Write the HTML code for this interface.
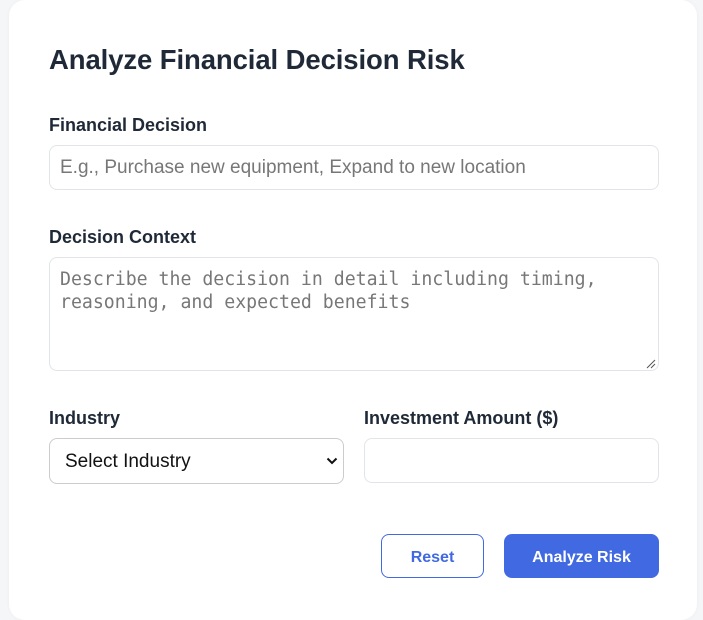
<!DOCTYPE html><html><head><style>
body{margin:0;background:#f5f6f8;font-family:"Liberation Sans",sans-serif;width:703px;height:605px;overflow:hidden;position:relative}
.card{position:absolute;left:9px;top:0;width:688px;height:620px;background:#fff;border-radius:16px;box-shadow:0 0 4px rgba(0,0,0,.04)}
.a{position:absolute}
h1{position:absolute;left:49px;top:44px;margin:0;font-size:27.5px;font-weight:600;color:#1f2937;letter-spacing:-0.1px}
.l{position:absolute;font-size:18px;font-weight:600;color:#1f2937}
.box{position:absolute;border:1px solid #e2e4e8;border-radius:8px;box-sizing:border-box}
.ph{position:absolute;color:#777;font-size:19px}
</style></head><body>
<div class="card"></div>
<h1>Analyze Financial Decision Risk</h1>
<div class="l" style="left:49px;top:115px">Financial Decision</div>
<div class="box" style="left:49px;top:145px;width:610px;height:45px"></div>
<div class="ph" style="left:60px;top:157px">E.g., Purchase new equipment, Expand to new location</div>
<div class="l" style="left:49px;top:227px">Decision Context</div>
<div class="box" style="left:49px;top:257px;width:610px;height:114px"></div>
<div class="ph" style="left:60px;top:268px;font-family:'DejaVu Sans Mono',monospace;font-size:18.2px;line-height:23px">Describe the decision in detail including timing,<br>reasoning, and expected benefits</div>
<svg class="a" style="left:646px;top:359px" width="10" height="10"><path d="M9 1L1 9M9 5L5 9" stroke="#555" stroke-width="1"/></svg>
<div class="l" style="left:49px;top:408px">Industry</div>
<div class="l" style="left:364px;top:408px">Investment Amount ($)</div>
<div class="box" style="left:49px;top:438px;width:295px;height:46px;border-color:#ccc"></div>
<div class="a" style="left:65px;top:451px;font-size:19px;color:#111">Select Industry</div>
<svg class="a" style="left:326px;top:457px" width="12" height="8"><path d="M1.5 1.5L6 6L10.5 1.5" stroke="#111" stroke-width="2" fill="none"/></svg>
<div class="box" style="left:364px;top:438px;width:295px;height:45px"></div>
<div class="a" style="left:381px;top:534px;width:103px;height:44px;border:1px solid #4169e1;border-radius:8px;box-sizing:border-box;color:#4169e1;font-size:16px;font-weight:600;text-align:center;line-height:46px">Reset</div>
<div class="a" style="left:504px;top:534px;width:155px;height:44px;background:#4169e1;border-radius:8px;color:#fff;font-size:16px;font-weight:600;text-align:center;line-height:48px">Analyze Risk</div>
</body></html>
